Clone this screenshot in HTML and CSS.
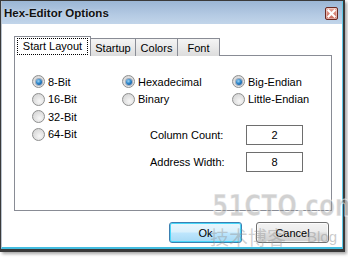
FILE: index.html
```html
<!DOCTYPE html>
<html>
<head>
<meta charset="utf-8">
<link rel="stylesheet" href="styles.css">
</head>
<body>
<div class="window">
  <div class="frame">
    <div class="titlebar">
      <span class="title">Hex-Editor Options</span>
      <span class="close"><svg width="9" height="9" viewBox="0 0 9 9"><path d="M1.5 1.5 L7.5 7.5 M7.5 1.5 L1.5 7.5" stroke="#fff" stroke-width="2.2" stroke-linecap="square"/></svg></span>
    </div>
    <div class="content">
      <div class="tabs">
        <div class="tab active"><span class="focus">Start Layout</span></div>
        <div class="tab t-startup">Startup</div>
        <div class="tab t-colors">Colors</div>
        <div class="tab t-font">Font</div>
      </div>
      <div class="panel">
        <div class="col c1">
          <label class="radio"><span class="dot on"></span>8-Bit</label>
          <label class="radio"><span class="dot"></span>16-Bit</label>
          <label class="radio"><span class="dot"></span>32-Bit</label>
          <label class="radio"><span class="dot"></span>64-Bit</label>
        </div>
        <div class="right">
          <div class="rrow">
            <div class="col c2">
              <label class="radio"><span class="dot on"></span>Hexadecimal</label>
              <label class="radio"><span class="dot"></span>Binary</label>
            </div>
            <div class="col c3">
              <label class="radio"><span class="dot on"></span>Big-Endian</label>
              <label class="radio"><span class="dot"></span>Little-Endian</label>
            </div>
          </div>
          <div class="form">
            <div class="frow"><span class="flabel">Column Count:</span><span class="box">2</span></div>
            <div class="frow"><span class="flabel">Address Width:</span><span class="box">8</span></div>
          </div>
        </div>
      </div>
      <div class="buttons">
        <div class="btn default">Ok</div>
        <div class="btn">Cancel</div>
      </div>
    </div>
  </div>
  <div class="watermark">
    <span class="wm-big">51CTO.com</span>
    <span class="wm-cn">技术博客</span>
    <span class="wm-blog">Blog</span>
  </div>
</div>
</body>
</html>
```
FILE: styles.css
```css
html, body {
  margin: 0;
  padding: 0;
  background: #fff;
}
body {
  width: 348px;
  height: 262px;
  overflow: hidden;
  font-family: "Liberation Sans", Arial, sans-serif;
  font-size: 11px;
  color: #000;
}
.window {
  position: relative;
  box-sizing: border-box;
  width: 345px;
  height: 252px;
  border: 1px solid #3a3a3a;
  border-right-width: 2px;
  border-bottom-width: 3px;
  box-shadow: 2px 2px 3px rgba(0,0,0,0.35);
}
.frame {
  box-sizing: border-box;
  height: 100%;
  border-left: 1px solid #b9c3cf;
  border-right: 1px solid #5fc8e6;
  border-bottom: 2px solid #43bde0;
  background: #fff;
}
.titlebar {
  height: 23px;
  display: flex;
  align-items: center;
  justify-content: space-between;
  padding: 0 4px 0 2px;
  background: linear-gradient(#9bb6d5, #b4cae3 60%, #c2d5ea);
}
.title {
  font-weight: bold;
  font-size: 11.5px;
  color: #111;
  text-shadow: 0 0 3px rgba(255,255,255,0.5);
  margin-top: 1px;
}
.close {
  box-sizing: border-box;
  width: 13px;
  height: 13px;
  margin-top: 1px;
  border: 1px solid #6b2a22;
  border-radius: 2px;
  background: linear-gradient(#e7a69a, #c9685a);
  display: flex;
  align-items: center;
  justify-content: center;
  box-shadow: inset 0 0 0 1px rgba(255,255,255,0.4);
}
.close svg { display: block; }
.content {
  padding: 12px 0 0 12px;
}
.tabs {
  display: flex;
  align-items: flex-end;
  height: 20px;
  margin-bottom: -1px;
  position: relative;
  z-index: 1;
}
.tab {
  box-sizing: border-box;
  height: 18px;
  border: 1px solid #898c95;
  border-bottom: none;
  background: linear-gradient(#f4f4f4, #e9e9e9 50%, #dcdcdc);
  display: flex;
  align-items: center;
  justify-content: center;
  margin-left: -1px;
  padding-top: 1px;
}
.tab.active {
  margin-left: 0;
  height: 20px;
  width: 77px;
  background: #fff;
  padding-top: 0;
}
.focus {
  box-sizing: border-box;
  border: 1px dotted #000;
  padding: 1px 4px 2px 4px;
  width: 71px;
  text-align: center;
}
.t-startup { width: 46px; }
.t-colors { width: 43px; }
.t-font { width: 43px; }
.panel {
  box-sizing: border-box;
  width: 318px;
  height: 156px;
  border: 1px solid #898c95;
  background: #fff;
  display: flex;
  padding: 17px 0 0 17px;
}
.col {
  display: flex;
  flex-direction: column;
}
.c1 { width: 90px; }
.c2 { width: 110px; }
.radio {
  height: 17.5px;
  display: flex;
  align-items: center;
  white-space: nowrap;
}
.dot {
  box-sizing: border-box;
  width: 13px;
  height: 13px;
  border-radius: 50%;
  border: 1px solid #8e8f8f;
  background: radial-gradient(circle at 60% 65%, #f7f7f7 0%, #e4e4e4 45%, #cfcfcf 100%);
  margin-right: 3px;
  position: relative;
  flex: none;
}
.dot.on::after {
  content: "";
  position: absolute;
  left: 2.5px;
  top: 2.5px;
  width: 6px;
  height: 6px;
  border-radius: 50%;
  background: radial-gradient(circle at 40% 35%, #9fd3f5 0%, #2b86c9 45%, #0b3f86 100%);
  box-shadow: 0 0 0 1px rgba(30,60,110,0.35);
}
.right {
  display: flex;
  flex-direction: column;
}
.rrow {
  display: flex;
}
.form {
  margin-top: 17px;
  padding-left: 28px;
  display: flex;
  flex-direction: column;
  gap: 7px;
}
.frow {
  display: flex;
  align-items: center;
}
.flabel {
  width: 96px;
}
.box {
  box-sizing: border-box;
  width: 57px;
  height: 20px;
  border: 1px solid #6e6e6e;
  display: flex;
  align-items: center;
  justify-content: center;
  padding-bottom: 1px;
}
.buttons {
  display: flex;
  justify-content: flex-end;
  gap: 14px;
  width: 318px;
  margin-top: 11px;
  padding-right: 3px;
  box-sizing: border-box;
}
.btn {
  box-sizing: border-box;
  width: 73px;
  height: 21px;
  border: 1px solid #707070;
  border-radius: 3px;
  background: linear-gradient(#f3f3f3, #ebebeb 48%, #dddddd 52%, #cfcfcf);
  display: flex;
  align-items: center;
  justify-content: center;
  box-shadow: inset 0 0 0 1px rgba(255,255,255,0.7);
}
.btn.default {
  border-color: #3c7fb1;
  box-shadow: inset 0 0 0 1px #48d7f9;
  background: linear-gradient(#eaf6fd, #d9f0fc 48%, #bee6fd 52%, #a7d9f5);
}
.watermark {
  position: absolute;
  left: 0;
  top: 0;
  width: 100%;
  height: 100%;
  pointer-events: none;
}
.wm-big {
  position: absolute;
  left: 211px;
  top: 188px;
  font-family: "DejaVu Sans Condensed", "DejaVu Sans", sans-serif;
  font-weight: bold;
  font-size: 30px;
  line-height: 34px;
  transform: scaleX(0.86);
  transform-origin: left center;
  color: rgba(150,150,150,0.45);
  -webkit-text-stroke: 1px rgba(255,255,255,0.6);
}
.wm-cn {
  position: absolute;
  left: 209px;
  top: 225px;
  font-family: "Noto Sans CJK SC", sans-serif;
  font-size: 19px;
  line-height: 22px;
  color: rgba(150,150,150,0.45);
}
.wm-blog {
  position: absolute;
  left: 306px;
  top: 227px;
  font-family: "Liberation Sans", sans-serif;
  font-size: 15px;
  color: rgba(150,150,150,0.5);
}
```
